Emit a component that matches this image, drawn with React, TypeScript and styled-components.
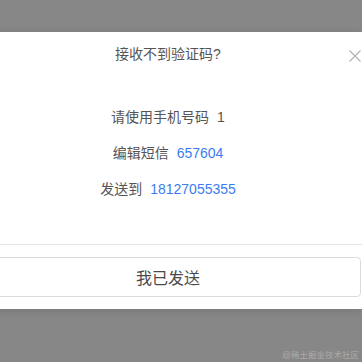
import React from "react";
import styled, { createGlobalStyle } from "styled-components";

const GlobalStyle = createGlobalStyle`
   html, body {
      margin: 0;
      padding: 0;
      width: 362px;
      height: 362px;
      overflow: hidden;
      background: #878787;
      font-family: "Liberation Sans", "Noto Sans CJK SC", sans-serif;
   }
`;

const Page = styled.div`
   position: relative;
   width: 362px;
   height: 362px;
   padding-top: 32px;
   box-sizing: border-box;
   overflow: hidden;
`;

const Modal = styled.div`
   position: relative;
   width: 388px;
   margin-left: -26px;
   background: #fff;
   box-shadow: 0 2px 8px rgba(0, 0, 0, 0.12);
   display: flex;
   flex-direction: column;
`;

const Header = styled.div`
   height: 44px;
   line-height: 44px;
   text-align: center;
   font-size: 14px;
   color: #555;
`;

const Close = styled.button`
   position: absolute;
   top: 18px;
   right: 1px;
   width: 12px;
   height: 12px;
   padding: 0;
   border: none;
   background: none;
   cursor: pointer;
   display: flex;
`;

const Body = styled.div`
   padding: 23px 0 37px;
   display: flex;
   flex-direction: column;
   align-items: center;
`;

const Row = styled.div`
   height: 36px;
   line-height: 36px;
   font-size: 14px;
   color: #555;
   display: flex;
`;

const Value = styled.span<{ $blue?: boolean }>`
   margin-left: 8px;
   color: ${(p) => (p.$blue ? "#3b7cf2" : "#555")};
`;

const Footer = styled.div`
   border-top: 1px solid #e6e6e6;
   padding: 12px 1px;
`;

const SentButton = styled.button`
   width: 100%;
   height: 40px;
   border: 1px solid #dcdcdc;
   border-radius: 4px;
   background: #fff;
   font-family: inherit;
   font-size: 16px;
   color: #4a4a4a;
   cursor: pointer;
`;

const Watermark = styled.span`
   position: absolute;
   right: 3px;
   bottom: 2px;
   font-size: 8.5px;
   color: rgba(255, 255, 255, 0.32);
`;

const rows = [
   { label: "请使用手机号码", value: "1", blue: false },
   { label: "编辑短信", value: "657604", blue: true },
   { label: "发送到", value: "18127055355", blue: true },
];

function App() {
   return (
      <Page>
         <GlobalStyle />
         <Modal>
            <Header>接收不到验证码?</Header>
            <Close aria-label="close">
               <svg width="12" height="12" viewBox="0 0 12 12">
                  <path d="M0.5 0.5 L11.5 11.5 M11.5 0.5 L0.5 11.5" stroke="#b0b0b0" strokeWidth="1.1" />
               </svg>
            </Close>
            <Body>
               {rows.map((item, index) => (
                  <Row key={index}>
                     {item.label}
                     <Value $blue={item.blue}>{item.value}</Value>
                  </Row>
               ))}
            </Body>
            <Footer>
               <SentButton>我已发送</SentButton>
            </Footer>
         </Modal>
         <Watermark>@稀土掘金技术社区</Watermark>
      </Page>
   );
}

export default App;
